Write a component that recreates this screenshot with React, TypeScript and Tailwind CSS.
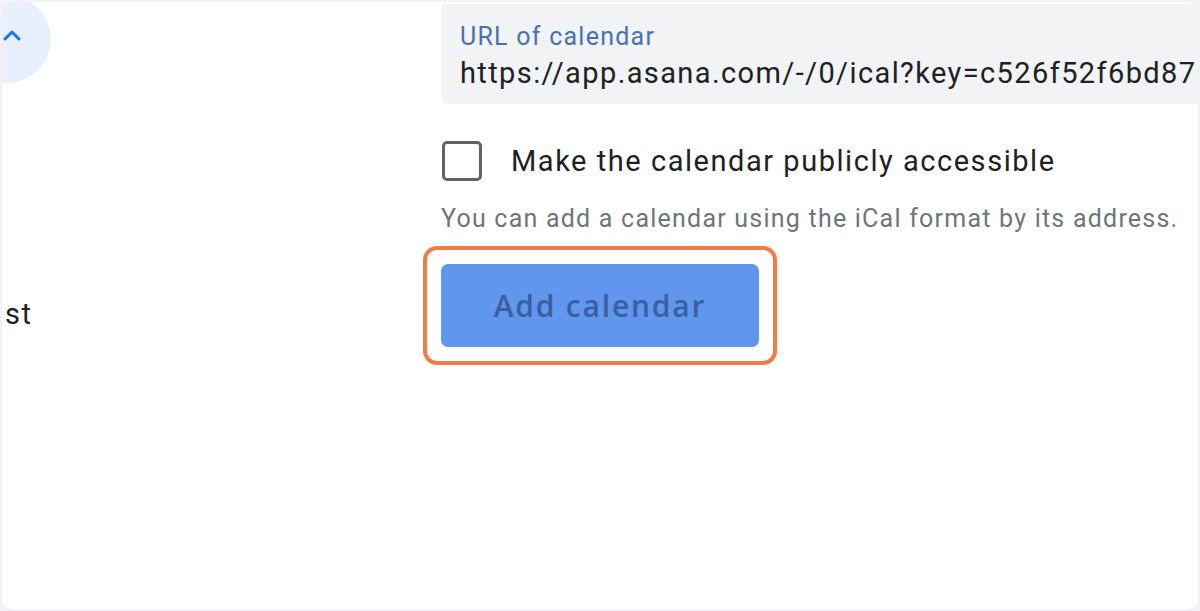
import React from 'react';

export default function App() {
  return (
    <div
      className="w-[1200px] h-[611px] bg-[#f1f1f6] p-[2px] overflow-hidden"
      style={{ fontFamily: 'Roboto, "Liberation Sans", sans-serif' }}
    >
      <div className="relative flex h-full w-full overflow-hidden rounded-[10px] bg-white">
        {/* left column, mostly cut off */}
        <div className="relative w-[439px] shrink-0">
          <div className="absolute left-[-39px] top-[-7px] flex h-[88px] w-[88px] items-center justify-center rounded-full bg-[#e8f0fe]">
            <svg
              width="18"
              height="12"
              viewBox="0 0 18 12"
              className="ml-[10px] mt-[-9px]"
              fill="none"
              stroke="#1a73e8"
              strokeWidth="3"
              strokeLinecap="round"
              strokeLinejoin="round"
            >
              <path d="M2 10 L9 3 L16 10" />
            </svg>
          </div>
          <div className="absolute left-[3px] top-[292px] text-[29px] leading-[40px] tracking-[0.05em] text-[#202124]">st</div>
        </div>

        {/* right column */}
        <div className="flex min-w-[900px] flex-col">
          <div className="mt-[2px] h-[100px] w-[900px] overflow-hidden rounded-bl-[8px] rounded-tl-[4px] bg-[#f1f3f4] pl-[19px] pt-[16px]">
            <div className="text-[25px] leading-[33px] tracking-[0.05em] text-[#4a6fb5]">URL of calendar</div>
            <div className="whitespace-nowrap text-[29px] leading-[40px] tracking-[0.048em] text-[#202124]">
              https://app.asana.com/-/0/ical?key=c526f52f6bd87
            </div>
          </div>

          <div className="mt-[37px] flex items-center gap-[29px]">
            <div className="ml-[1px] h-[40px] w-[40px] rounded-[5px] border-[3px] border-[#5f6368]" />
            <span className="whitespace-nowrap text-[29px] leading-[40px] tracking-[0.053em] text-[#202124]">
              Make the calendar publicly accessible
            </span>
          </div>

          <div className="mt-[20px] whitespace-nowrap text-[25px] leading-[36px] tracking-[0.049em] text-[#70757a]">
            You can add a calendar using the iCal format by its address.
          </div>

          <div className="ml-[-18px] mt-[9px] w-fit rounded-[14px] border-[4px] border-[#f47b46] p-[14px]">
            <button
              className="flex h-[83px] w-[318px] items-center justify-center rounded-[7px] bg-[#6096ec] text-[30px] font-semibold tracking-[0.06em] text-[#3a5fa3]"
              style={{ fontFamily: '"Open Sans", Roboto, sans-serif' }}
            >
              Add calendar
            </button>
          </div>
        </div>
      </div>
    </div>
  );
}
